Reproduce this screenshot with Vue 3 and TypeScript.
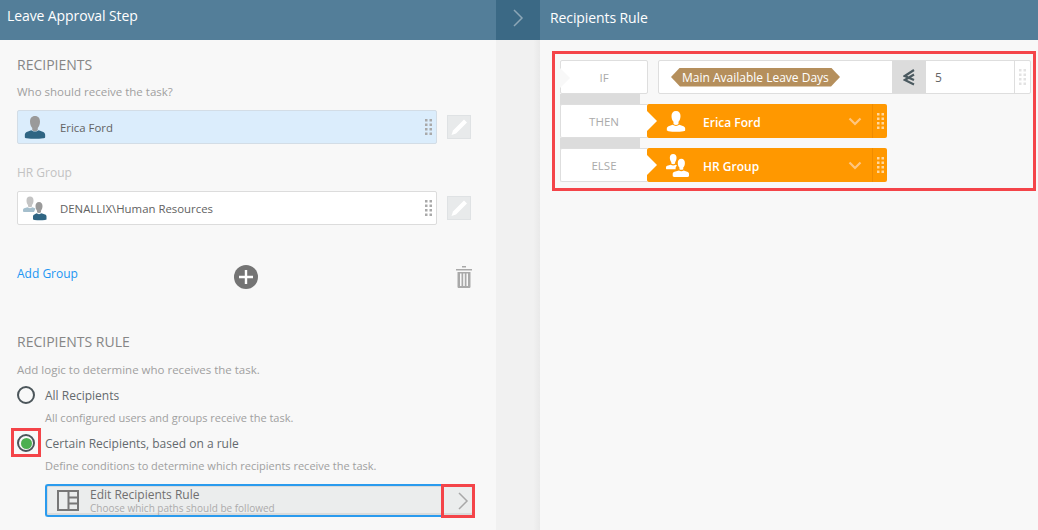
<script setup lang="ts">
const dots = [0, 1, 2, 3].flatMap((r) => [0, 1].map((c) => ({ x: c * 4.5, y: r * 4.5, k: `${r}-${c}` })));
</script>

<template>
  <div class="page">
    <section class="left">
      <header class="bar"><h1>Leave Approval Step</h1></header>
      <div class="left-body">
        <h2>RECIPIENTS</h2>
        <p class="hint who">Who should receive the task?</p>

        <div class="pick-row">
          <div class="pick selected">
            <svg class="pick-icon" width="24" height="24" viewBox="0 0 24 26">
              <path d="M12 1c3.600 0 5.400 2.400 5.400 6 0 3-1 5.600-2.400 7v2.500c-1.800 1.600-4.200 1.600-6 0V14C7.600 12.600 6.600 10 6.600 7c0-3.600 1.800-6 5.400-6z" fill="#9a9a9a"/>
              <path d="M8 16.500c2.200 1.800 5.800 1.800 8 0l5 1.800c1.200.6 2 1.800 2 3.200V24c0 .8-1 1-2 1.200-6 .8-12 .8-18 0-1-.2-2-.4-2-1.200v-2.500c0-1.400.8-2.600 2-3.200z" fill="#2f6583"/>
            </svg>
            <span class="pick-text">Erica Ford</span>
            <svg class="grip" width="7" height="16" viewBox="0 0 7 16"><rect v-for="d in dots" :key="d.k" :x="d.x" :y="d.y" width="2.500" height="2.500" fill="#a9a9a9"/></svg>
          </div>
          <button class="pencil">
            <svg width="20" height="20" viewBox="0 0 20 20"><path d="M15 2.500l3 3L7 16.500l-4.500 1.500L4 13.500z" fill="#fff"/></svg>
          </button>
        </div>

        <p class="group-name">HR Group</p>

        <div class="pick-row">
          <div class="pick">
            <svg class="pick-icon" width="24" height="26" viewBox="0 0 24 26">
              <path d="M7 1.500c2.300 0 3.500 1.600 3.500 3.900 0 2-.7 3.600-1.500 4.600v1.500c-1.200 1-2.800 1-4 0V10c-.8-1-1.500-2.600-1.500-4.600C3.500 3.100 4.700 1.500 7 1.500z" fill="#c4c4c4"/>
              <path d="M4.500 12.300c1.400 1.100 3.600 1.100 5 0l3 1.200-1.500 3.500H1c-.6 0-1-.3-1-.8v-1.300c0-.8.500-1.400 1.200-1.700z" fill="#a5bfcd"/>
              <path d="M16 7c2.300 0 3.500 1.700 3.500 4 0 2-.7 3.700-1.500 4.700v1.500c-1.200 1-2.800 1-4 0v-1.500c-.8-1-1.500-2.700-1.500-4.700 0-2.300 1.200-4 3.500-4z" fill="#9a9a9a"/>
              <path d="M13.500 18.300c1.400 1.100 3.600 1.100 5 0l3.600 1.300c.9.400 1.400 1.200 1.400 2V24c0 .6-.5.800-1.500.9-3.500.5-7 .5-10.500 0-1-.1-1.500-.3-1.500-.9v-2.400c0-.8.500-1.600 1.400-2z" fill="#2f6583"/>
            </svg>
            <span class="pick-text">DENALLIX\Human Resources</span>
            <svg class="grip" width="7" height="16" viewBox="0 0 7 16"><rect v-for="d in dots" :key="d.k" :x="d.x" :y="d.y" width="2.500" height="2.500" fill="#a9a9a9"/></svg>
          </div>
          <button class="pencil">
            <svg width="20" height="20" viewBox="0 0 20 20"><path d="M15 2.500l3 3L7 16.500l-4.500 1.500L4 13.500z" fill="#fff"/></svg>
          </button>
        </div>

        <div class="add-row">
          <a class="add-link">Add Group</a>
          <svg class="add-icon" width="24" height="24" viewBox="0 0 24 24">
            <circle cx="12" cy="12" r="12" fill="#747474"/>
            <path d="M12 5v14M5 12h14" stroke="#fff" stroke-width="2.400"/>
          </svg>
          <svg class="trash" width="16" height="24" viewBox="0 0 16 24">
            <path d="M6 1h4v1.500H6zM0 4h16v1.500H0z" fill="#a9a9a9"/>
            <path d="M1.500 7h13v14.500c0 1-.6 1.500-1.500 1.500H3c-.9 0-1.500-.5-1.500-1.500zM4 8.500v12.500h1.500V8.500zm3.200 0v12.500h1.600V8.500zm3.300 0v12.500H12V8.500z" fill="#a9a9a9" fill-rule="evenodd"/>
          </svg>
        </div>

        <h2 class="rule-title">RECIPIENTS RULE</h2>
        <p class="hint add-logic">Add logic to determine who receives the task.</p>

        <div class="radio-line">
          <span class="radio"></span>
          <span class="radio-label">All Recipients</span>
        </div>
        <p class="hint radio-hint">All configured users and groups receive the task.</p>

        <div class="radio-line second">
          <span class="radio on"><i class="red-mark radio-mark"></i></span>
          <span class="radio-label">Certain Recipients, based on a rule</span>
        </div>
        <p class="hint radio-hint">Define conditions to determine which recipients receive the task.</p>

        <div class="edit-rule">
          <svg class="edit-icon" width="22" height="21" viewBox="0 0 22 21">
            <path d="M1 1h20v19H1zM11.500 1v19M11.500 7.500H21M11.500 13.500H21" fill="none" stroke="#777" stroke-width="2"/>
          </svg>
          <div class="edit-text">
            <span class="edit-title">Edit Recipients Rule</span>
            <span class="edit-sub">Choose which paths should be followed</span>
          </div>
          <svg class="edit-chevron" width="12" height="18" viewBox="0 0 12 18"><path d="M2 1l8 8-8 8" fill="none" stroke="#a8a8a8" stroke-width="1.500"/></svg>
          <i class="red-mark chevron-mark"></i>
        </div>
      </div>
    </section>

    <section class="gutter">
      <header class="gutter-head">
        <svg width="12" height="18" viewBox="0 0 12 18"><path d="M2 1l8 8-8 8" fill="none" stroke="#8da7b7" stroke-width="1.500"/></svg>
      </header>
    </section>

    <section class="right">
      <header class="bar right-bar"><h1>Recipients Rule</h1></header>
      <div class="rule-box">
        <div class="if-row">
          <div class="chip if-chip">IF</div>
          <div class="condition">
            <span class="tag-wrap"><span class="tag">Main Available Leave Days</span></span>
            <span class="op">
              <svg width="12" height="17" viewBox="0 0 12 17"><path d="M11 1L1.800 7l9.200 4M11 5.500L1.800 11l9.200 4.500" fill="none" stroke="#4b5a60" stroke-width="2.200"/></svg>
            </span>
            <span class="value">5</span>
            <span class="value-grip">
              <svg width="7" height="16" viewBox="0 0 7 16"><rect v-for="d in dots" :key="d.k" :x="d.x" :y="d.y" width="2.500" height="2.500" fill="#e3e3e3"/></svg>
            </span>
          </div>
        </div>

        <div class="connector"></div>
        <div class="branch">
          <div class="chip branch-chip">THEN</div>
          <div class="action">
            <i class="notch"></i>
            <svg class="action-icon" width="20" height="22" viewBox="0 0 24 26">
              <path d="M12 1c3.600 0 5.400 2.400 5.400 6 0 3-1 5.600-2.400 7v2.500c-1.800 1.600-4.200 1.600-6 0V14C7.600 12.600 6.600 10 6.600 7c0-3.600 1.800-6 5.400-6zM8 17.500c2.200 1.800 5.800 1.800 8 0l5 1.800c1.200.5 2 1.500 2 2.700V24c0 .8-1 1-2 1.200-6 .8-12 .8-18 0-1-.2-2-.4-2-1.200v-2c0-1.200.8-2.200 2-2.700z" fill="#fff"/>
            </svg>
            <span class="action-text">Erica Ford</span>
            <svg class="action-chevron" width="14" height="9" viewBox="0 0 14 9"><path d="M1.500 1.500L7 7l5.500-5.500" fill="none" stroke="#ffc680" stroke-width="2.200"/></svg>
            <span class="action-grip">
              <svg width="7" height="16" viewBox="0 0 7 16"><rect v-for="d in dots" :key="d.k" :x="d.x" :y="d.y" width="2.500" height="2.500" fill="#ffd79e"/></svg>
            </span>
          </div>
        </div>

        <div class="connector"></div>
        <div class="branch">
          <div class="chip branch-chip">ELSE</div>
          <div class="action">
            <i class="notch"></i>
            <svg class="action-icon" width="23" height="23" viewBox="0 0 24 24">
              <path d="M7.500 0c2.300 0 3.500 1.600 3.500 3.900 0 2-.7 3.600-1.500 4.600v1.500c-1.200 1-2.800 1-4 0V8.500C4.700 7.500 4 5.900 4 3.900 4 1.600 5.200 0 7.500 0zM5 11.300c1.400 1.100 3.600 1.100 5 0l1.500.7c-.7.800-1.500 1.600-1.500 3v1H1.500C.6 16 0 15.700 0 15v-1c0-.8.500-1.400 1.200-1.700z" fill="#fff"/>
              <path d="M16 5c2.500 0 3.700 1.800 3.700 4.300 0 2.200-.7 3.900-1.700 4.900v1.600c-1.200 1-2.800 1-4 0v-1.600c-1-1-1.700-2.700-1.700-4.900C12.300 6.800 13.500 5 16 5zM13.500 17.300c1.400 1.100 3.600 1.100 5 0l3.600 1.300c.9.400 1.900 1.200 1.900 2V23c0 .6-.5.800-1.500.9-5 .4-9 .4-14 0-1-.1-1.500-.3-1.500-.9v-2.400c0-.8 1-1.600 1.900-2z" fill="#fff"/>
            </svg>
            <span class="action-text">HR Group</span>
            <svg class="action-chevron" width="14" height="9" viewBox="0 0 14 9"><path d="M1.500 1.500L7 7l5.500-5.500" fill="none" stroke="#ffc680" stroke-width="2.200"/></svg>
            <span class="action-grip">
              <svg width="7" height="16" viewBox="0 0 7 16"><rect v-for="d in dots" :key="d.k" :x="d.x" :y="d.y" width="2.500" height="2.500" fill="#ffd79e"/></svg>
            </span>
          </div>
        </div>
      </div>
    </section>
  </div>
</template>

<style>
html, body { margin: 0; background: #f8f8f8; overflow: hidden; }
</style>

<style scoped>
.page {
  display: flex;
  width: 1038px;
  height: 530px;
  overflow: hidden;
  font-family: "Open Sans", "Noto Sans", sans-serif;
  color: #666;
}
h1, h2, p { margin: 0; font-weight: 400; }
.left { width: 496px; flex: none; background: #f8f8f8; }
.bar {
  height: 40px;
  padding-left: 7px;
  display: flex;
  align-items: flex-start;
  background: #537e99;
  box-sizing: border-box;
}
.bar h1 { color: #fff; font-size: 14px; line-height: 32px; letter-spacing: -0.1px; }
.left-body { padding: 16px 0 0 17px; position: relative; }
h2 { font-size: 14px; line-height: 18px; color: #868686; }
.hint { font-size: 11.500px; line-height: 16px; color: #a0a0a0; }
.who { margin-top: 10px; }
.pick-row { display: flex; align-items: center; gap: 10px; }
.who + .pick-row { margin-top: 10px; }
.pick {
  width: 420px;
  height: 34px;
  box-sizing: border-box;
  border: 1px solid #dcdcdc;
  border-radius: 2px;
  background: #fff;
  display: flex;
  align-items: center;
  padding: 0 4px 0 5px;
}
.pick.selected { background: #dbedfc; border-color: #d3dde6; }
.pick-icon { flex: none; }
.pick-text { margin-left: 13px; font-size: 11.400px; color: #626262; flex: 1; }
.grip { flex: none; }
.pencil {
  width: 24px;
  height: 24px;
  padding: 0;
  border: 1px solid #dfe2e4;
  background: #e8eaeb;
  display: flex;
  align-items: center;
  justify-content: center;
}
.group-name { margin-top: 21px; margin-bottom: 10px; font-size: 12px; line-height: 16px; color: #c2c2c2; }
.add-row { display: flex; align-items: center; height: 24px; margin-top: 40px; position: relative; width: 456px; }
.add-link { font-size: 12px; color: #2196f3; margin-top: -8px; }
.add-icon { position: absolute; left: 217px; top: 0; }
.trash { position: absolute; left: 439px; top: 0; }
.rule-title { margin-top: 44px; }
.add-logic { margin-top: 11px; }
.radio-line { display: flex; align-items: center; gap: 10px; margin-top: 8px; height: 18px; }
.radio-line.second { margin-top: 8px; }
.radio {
  width: 18px;
  height: 18px;
  box-sizing: border-box;
  border: 2.500px solid #4c565b;
  border-radius: 50%;
  position: relative;
  flex: none;
}
.radio.on::after {
  content: "";
  position: absolute;
  inset: 1.500px;
  border-radius: 50%;
  background: #4caf50;
}
.radio-label { font-size: 12px; color: #646a6e; }
.radio-hint { margin: 6px 0 0 28px; font-size: 11px; }
.red-mark { position: absolute; border: 3px solid #f44449; box-sizing: border-box; z-index: 2; }
.radio-mark { left: -8.500px; top: -8.500px; width: 30px; height: 29px; }
.edit-rule {
  margin: 10px 0 0 28px;
  width: 429px;
  height: 33px;
  box-sizing: border-box;
  border: 2px solid #2a9bee;
  border-right-color: #d4d6d6;
  box-shadow: inset 0 -2px 0 #d9dbdb, inset 0 1px 0 #d9dbdb, inset 1px 0 0 #d9dbdb;
  border-radius: 3px;
  background: #ebeded;
  display: flex;
  align-items: center;
  padding: 0 2px 0 10px;
  position: relative;
}
.edit-text { display: flex; flex-direction: column; margin-left: 11px; flex: 1; padding-top: 1px; }
.edit-title { font-size: 12px; line-height: 14px; color: #707070; }
.edit-sub { font-size: 10px; line-height: 13px; color: #ababab; }
.edit-chevron { margin-right: 1px; }
.chevron-mark { right: -3px; top: -2px; width: 34px; height: 34px; }
.gutter { width: 44px; flex: none; background: linear-gradient(90deg, #f1f1f1 85%, #e9e9e9); }
.gutter-head {
  height: 40px;
  background: #3b6985;
  display: flex;
  justify-content: flex-end;
  padding: 9px 16px 0 0;
  box-sizing: border-box;
}
.right { flex: 1; background: #f8f8f8; }
.right-bar { padding-left: 10px; }
.right-bar h1 { line-height: 36px; }
.rule-box {
  margin: 11px 0 0 12px;
  width: 484px;
  height: 140px;
  box-sizing: border-box;
  border: 3px solid #f44449;
  padding: 6px 0 0 5px;
}
.if-row { display: flex; gap: 10px; height: 34px; }
.chip {
  width: 88px;
  height: 34px;
  box-sizing: border-box;
  border: 1px solid #dedede;
  border-radius: 2px;
  background: #fff;
  display: flex;
  align-items: center;
  justify-content: center;
  font-size: 11.500px;
  color: #aaa;
  position: relative;
}
.if-chip::before {
  content: "";
  position: absolute;
  left: -1px;
  top: 7px;
  border-style: solid;
  border-width: 10px 0 10px 10px;
  border-color: transparent transparent transparent #f8f8f8;
}
.condition {
  width: 373px;
  height: 34px;
  box-sizing: border-box;
  border: 1px solid #dedede;
  border-radius: 2px;
  background: #fff;
  display: flex;
  align-items: stretch;
}
.tag-wrap { width: 233px; flex: none; display: flex; align-items: center; padding-left: 12px; box-sizing: border-box; }
.tag {
  height: 19px;
  line-height: 19px;
  width: 169px;
  padding-left: 11px;
  box-sizing: border-box;
  background: #b58f5c;
  color: #fff;
  font-size: 12px;
  white-space: nowrap;
  clip-path: polygon(0 50%, 9px 0, calc(100% - 9px) 0, 100% 50%, calc(100% - 9px) 100%, 9px 100%);
}
.op { width: 34px; background: #dcdcdc; display: flex; align-items: center; justify-content: center; flex: none; }
.value { flex: 1; padding-left: 9px; font-size: 12px; line-height: 34px; color: #666; }
.value-grip { width: 16px; border-left: 1px solid #dedede; display: flex; align-items: center; justify-content: center; box-sizing: border-box; }
.connector { width: 80px; height: 11px; background: #dcdcdc; }
.branch { display: flex; height: 34px; margin-top: -1px; }
.branch-chip { width: 87px; border-right: none; border-radius: 2px 0 0 2px; padding-left: 0; }
.action {
  width: 240px;
  height: 34px;
  background: #ff9800;
  border-radius: 2px;
  display: flex;
  align-items: center;
  color: #fff;
  position: relative;
  padding-left: 19px;
  box-sizing: border-box;
}
.notch {
  position: absolute;
  left: 0;
  top: 7px;
  border-style: solid;
  border-width: 10px 0 10px 10px;
  border-color: transparent transparent transparent #fff;
}
.action-icon { flex: none; }
.action-text { font-size: 12px; font-weight: 600; margin-left: 17px; flex: 1; padding-top: 2px; }
.branch:last-child .action-text { margin-left: 14px; }
.action-chevron { flex: none; margin-right: 10px; }
.action-grip {
  width: 15px;
  height: 34px;
  border-left: 1px solid #f08c00;
  display: flex;
  align-items: center;
  justify-content: center;
  box-sizing: border-box;
  flex: none;
}
</style>
